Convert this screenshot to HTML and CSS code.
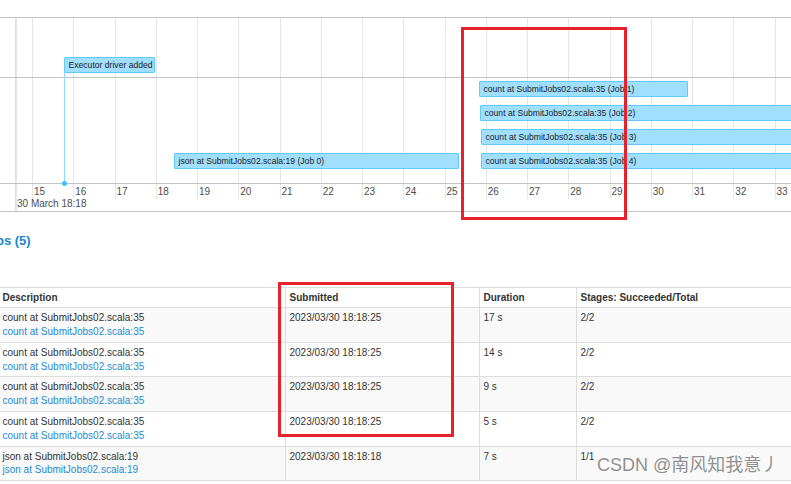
FILE: index.html
```html
<!DOCTYPE html>
<html lang="en">
<head>
<meta charset="utf-8">
<title>Spark Jobs</title>
<link rel="stylesheet" href="styles.css">
</head>
<body>
<div class="timeline">
  <div class="tl-frame">
    <div class="tl-grid">
      <div class="tick"><span>15</span></div>
      <div class="tick"><span>16</span></div>
      <div class="tick"><span>17</span></div>
      <div class="tick"><span>18</span></div>
      <div class="tick"><span>19</span></div>
      <div class="tick"><span>20</span></div>
      <div class="tick"><span>21</span></div>
      <div class="tick"><span>22</span></div>
      <div class="tick"><span>23</span></div>
      <div class="tick"><span>24</span></div>
      <div class="tick"><span>25</span></div>
      <div class="tick"><span>26</span></div>
      <div class="tick"><span>27</span></div>
      <div class="tick"><span>28</span></div>
      <div class="tick"><span>29</span></div>
      <div class="tick"><span>30</span></div>
      <div class="tick"><span>31</span></div>
      <div class="tick"><span>32</span></div>
      <div class="tick"><span>33</span></div>
    </div>
    <div class="panel-edge"></div>
    <div class="major-line"></div>
    <div class="group group-exec">
      <div class="item exec">Executor driver added</div>
    </div>
    <div class="group group-jobs">
      <div class="item job lane4" style="left:174px;width:285px">json at SubmitJobs02.scala:19 (Job 0)</div>
      <div class="item job lane1" style="left:479px;width:209px">count at SubmitJobs02.scala:35 (Job 1)</div>
      <div class="item job lane2" style="left:480px;width:340px">count at SubmitJobs02.scala:35 (Job 2)</div>
      <div class="item job lane3" style="left:481px;width:340px">count at SubmitJobs02.scala:35 (Job 3)</div>
      <div class="item job lane4" style="left:481px;width:340px">count at SubmitJobs02.scala:35 (Job 4)</div>
    </div>
    <div class="exec-line"></div>
    <div class="exec-dot"></div>
    <div class="axis">
      <div class="major-label">30 March 18:18</div>
    </div>
  </div>
</div>

<div class="jobs-section">
  <h4 class="section-title">Completed Jobs (5)</h4>
  <table class="jobs-table">
    <colgroup>
      <col class="c-desc">
      <col class="c-sub">
      <col class="c-dur">
      <col class="c-stage">
    </colgroup>
    <thead>
      <tr><th>Description</th><th>Submitted</th><th>Duration</th><th>Stages: Succeeded/Total</th></tr>
    </thead>
    <tbody>
      <tr>
        <td><div>count at SubmitJobs02.scala:35</div><a href="#">count at SubmitJobs02.scala:35</a></td>
        <td>2023/03/30 18:18:25</td><td>17 s</td><td>2/2</td>
      </tr>
      <tr>
        <td><div>count at SubmitJobs02.scala:35</div><a href="#">count at SubmitJobs02.scala:35</a></td>
        <td>2023/03/30 18:18:25</td><td>14 s</td><td>2/2</td>
      </tr>
      <tr>
        <td><div>count at SubmitJobs02.scala:35</div><a href="#">count at SubmitJobs02.scala:35</a></td>
        <td>2023/03/30 18:18:25</td><td>9 s</td><td>2/2</td>
      </tr>
      <tr>
        <td><div>count at SubmitJobs02.scala:35</div><a href="#">count at SubmitJobs02.scala:35</a></td>
        <td>2023/03/30 18:18:25</td><td>5 s</td><td>2/2</td>
      </tr>
      <tr>
        <td><div>json at SubmitJobs02.scala:19</div><a href="#">json at SubmitJobs02.scala:19</a></td>
        <td>2023/03/30 18:18:18</td><td>7 s</td><td>1/1</td>
      </tr>
    </tbody>
  </table>
</div>

<div class="mark mark-timeline"></div>
<div class="mark mark-submitted"></div>
<div class="watermark">CSDN @南风知我意丿</div>
</body>
</html>
```
FILE: styles.css
```css
html, body {
  margin: 0;
  padding: 0;
  width: 791px;
  height: 484px;
  overflow: hidden;
  background: #fff;
}
body {
  font-family: "Liberation Sans", Arial, "Noto Sans CJK SC", sans-serif;
  color: #333;
  position: relative;
}

/* ---------- timeline ---------- */
.timeline {
  padding-top: 17px;
}
.tl-frame {
  position: relative;
  border-top: 1px solid #c4c4c4;
  border-bottom: 1px solid #c4c4c4;
  height: 193px;
  overflow: hidden;
}
.tl-grid {
  position: absolute;
  left: 0;
  top: 0;
  display: flex;
  padding-left: 32px;
  height: 181px;
}
.tick {
  flex: none;
  width: 41.25px;
  height: 181px;
  box-sizing: border-box;
  border-left: 1px solid #e5e5e5;
  display: flex;
  flex-direction: column;
  justify-content: flex-end;
}
.tick span {
  font-size: 10px;
  line-height: 12px;
  color: #4d4d4d;
  padding-left: 1px;
  padding-bottom: 1px;
}
.panel-edge,
.major-line {
  position: absolute;
  top: 0;
  bottom: 0;
  width: 1px;
}
.panel-edge { left: 15px; background: #e0e0e0; }
.major-line { left: 16px; background: #e5e5e5; }

.group {
  position: relative;
  border-bottom: 1px solid #c4c4c4;
}
.group-exec { height: 59px; }
.group-jobs { height: 105px; }

.item {
  position: absolute;
  box-sizing: border-box;
  height: 16px;
  background: #a0dfff;
  border: 1px solid #62c9f8;
  border-radius: 1px;
  font-size: 8.6px;
  line-height: 14px;
  padding: 0 3.5px;
  color: #222;
  white-space: nowrap;
  overflow: hidden;
}
.exec {
  left: 64px;
  top: 39px;
  width: 91px;
}
.lane1 { top: 3px; }
.lane2 { top: 27px; }
.lane3 { top: 51px; }
.lane4 { top: 75px; }

.exec-line {
  position: absolute;
  left: 64px;
  top: 55px;
  width: 1px;
  height: 110px;
  background: #8fd8ff;
}
.exec-dot {
  position: absolute;
  left: 62px;
  top: 162.5px;
  width: 5px;
  height: 5px;
  border-radius: 50%;
  background: #3ec0ff;
}
.axis {
  height: 27px;
  display: flex;
  flex-direction: column;
  justify-content: flex-end;
}
.major-label {
  font-size: 10px;
  line-height: 12px;
  color: #4d4d4d;
  padding-left: 17px;
  padding-bottom: 1px;
}

/* ---------- jobs table ---------- */
.section-title {
  margin: 21px 0 0 -90px;
  font-size: 13px;
  line-height: 16px;
  font-weight: bold;
  color: #1a86cf;
  white-space: nowrap;
}
.jobs-table {
  margin: 37.5px 0 0 -2px;
  border-collapse: collapse;
  table-layout: fixed;
  width: 1000px;
  font-size: 10px;
  line-height: 13.8px;
}
.c-desc { width: 287px; }
.c-sub { width: 194px; }
.c-dur { width: 97px; }
.c-stage { width: 422px; }
.jobs-table th,
.jobs-table td {
  border: 1px solid #ddd;
  padding: 3px 3.5px;
  text-align: left;
  vertical-align: top;
  white-space: nowrap;
}
.jobs-table th {
  font-weight: bold;
  color: #333;
}
.jobs-table tbody tr:nth-child(odd) td {
  background: #f9f9f9;
}
.jobs-table a {
  color: #1f8ad2;
  text-decoration: none;
}

/* ---------- annotations ---------- */
.mark {
  position: absolute;
  box-sizing: border-box;
  border: 3px solid #e8222c;
}
.mark-timeline {
  left: 461px;
  top: 27px;
  width: 166px;
  height: 193px;
}
.mark-submitted {
  left: 278px;
  top: 282px;
  width: 176px;
  height: 155px;
}
.watermark {
  position: absolute;
  left: 597px;
  top: 454px;
  font-family: "Liberation Sans", Arial, "Noto Sans CJK SC", sans-serif;
  font-size: 18px;
  line-height: 22px;
  color: #8f8f8f;
  text-shadow: 0 0 2px #fff, 0 0 1px #fff;
  white-space: nowrap;
}
```
